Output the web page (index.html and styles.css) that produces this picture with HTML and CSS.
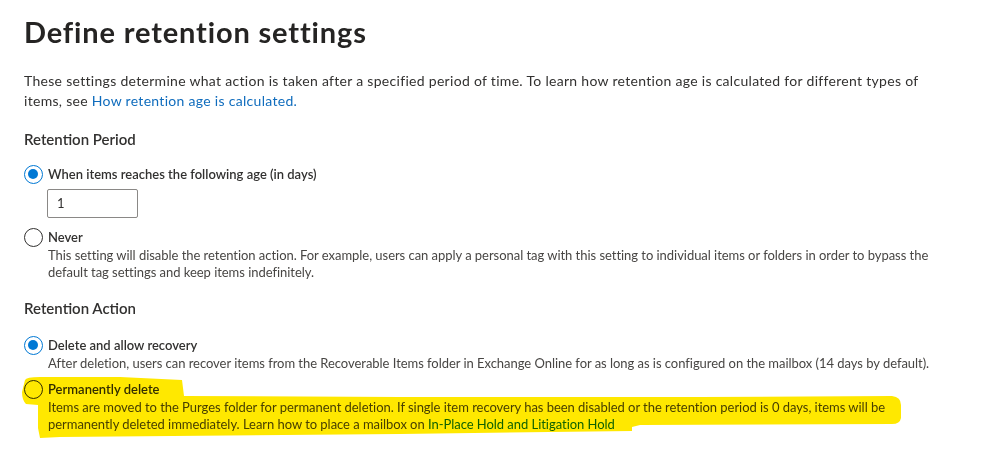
FILE: index.html
```html
<!DOCTYPE html>
<html lang="en">
<head>
<meta charset="utf-8">
<title>Define retention settings</title>
<link rel="stylesheet" href="styles.css">
</head>
<body>
<main class="page">
  <h1 class="title">Define retention settings</h1>
  <p class="intro">These settings determine what action is taken after a specified period of time. To learn how retention age is calculated for different types of<br>items, see <a class="link" href="#">How retention age is calculated.</a></p>

  <h2 class="section">Retention Period</h2>
  <div class="option">
    <span class="radio checked"></span>
    <span class="label">When items reaches the following age (in days)</span>
    <div class="body"><div class="input">1</div></div>
  </div>
  <div class="option gap-input">
    <span class="radio"></span>
    <span class="label">Never</span>
    <p class="desc">This setting will disable the retention action. For example, users can apply a personal tag with this setting to individual items or folders in order to bypass the<br>default tag settings and keep items indefinitely.</p>
  </div>

  <h2 class="section action">Retention Action</h2>
  <div class="option first-action">
    <span class="radio checked"></span>
    <span class="label">Delete and allow recovery</span>
    <p class="desc">After deletion, users can recover items from the Recoverable Items folder in Exchange Online for as long as is configured on the mailbox (14 days by default).</p>
  </div>
  <div class="option next">
    <span class="radio"></span>
    <span class="label">Permanently delete</span>
    <p class="desc">Items are moved to the Purges folder for permanent deletion. If single item recovery has been disabled or the retention period is 0 days, items will be<br>permanently deleted immediately. Learn how to place a mailbox on <a class="link" href="#">In-Place Hold and Litigation Hold</a></p>
  </div>

  <svg class="highlight" width="999" height="463" viewBox="0 0 999 463" aria-hidden="true">
    <path d="M25 380 Q 26 377 40 377 L 120 377 L 182 380 L 184 396 L 400 397 L 700 397 L 892 396 Q 901 397 901 405 L 901 418 Q 900 424 892 424 L 640 425 L 632 427 L 632 431 L 400 434 L 60 437 L 40 438 L 38 428 L 38 405 L 26 404 Q 22 400 22 392 Z"/>
  </svg>
</main>
</body>
</html>
```

FILE: styles.css
```css
html, body {
  margin: 0;
  padding: 0;
  background: #ffffff;
}

body {
  font-family: "Segoe UI", Lato, "Open Sans", sans-serif;
  color: #323130;
}

.page {
  position: relative;
  width: 999px;
  height: 463px;
  padding: 14px 0 0 24px;
  box-sizing: border-box;
  overflow: hidden;
}

.title {
  margin: 0;
  font-size: 29px;
  line-height: 36px;
  font-weight: 700;
  letter-spacing: 0.85px;
  color: #252423;
}

.intro {
  margin: 21px 0 0;
  font-size: 14px;
  line-height: 20px;
  letter-spacing: 0.3px;
  color: #323130;
}

.link {
  color: #0f6cbd;
  text-decoration: none;
}

.section {
  margin: 17px 0 0;
  font-size: 15px;
  line-height: 22px;
  font-weight: 600;
  color: #323130;
}

.section.action {
  margin-top: 16px;
}

.option {
  display: grid;
  grid-template-columns: 19px 1fr;
  column-gap: 5px;
  margin-top: 15px;
}

.option.first-action {
  margin-top: 17px;
}

.option.gap-input {
  margin-top: 10px;
}

.option.next {
  margin-top: 8px;
}

.radio {
  box-sizing: border-box;
  width: 19px;
  height: 19px;
  border: 1.5px solid #323130;
  border-radius: 50%;
  background: #fff;
  position: relative;
}

.radio.checked {
  border-color: #0078d4;
}

.radio.checked::after {
  content: "";
  position: absolute;
  left: 3px;
  top: 3px;
  width: 10px;
  height: 10px;
  border-radius: 50%;
  background: #0078d4;
}

.label {
  font-size: 13px;
  line-height: 19px;
  font-weight: 600;
  color: #323130;
}

.body {
  grid-column: 2;
}

.input {
  box-sizing: border-box;
  width: 91px;
  height: 29px;
  margin: 5px 0 0 -1px;
  padding: 0 9px;
  border: 1px solid #8a8886;
  border-radius: 2px;
  font-size: 13px;
  line-height: 27px;
  color: #323130;
}

.desc {
  grid-column: 2;
  margin: 0;
  font-size: 13px;
  line-height: 17px;
  letter-spacing: -0.04px;
  color: #484644;
}

.highlight {
  position: absolute;
  left: 0;
  top: 0;
  pointer-events: none;
  mix-blend-mode: multiply;
}

.highlight path {
  fill: #ffe800;
}
```
